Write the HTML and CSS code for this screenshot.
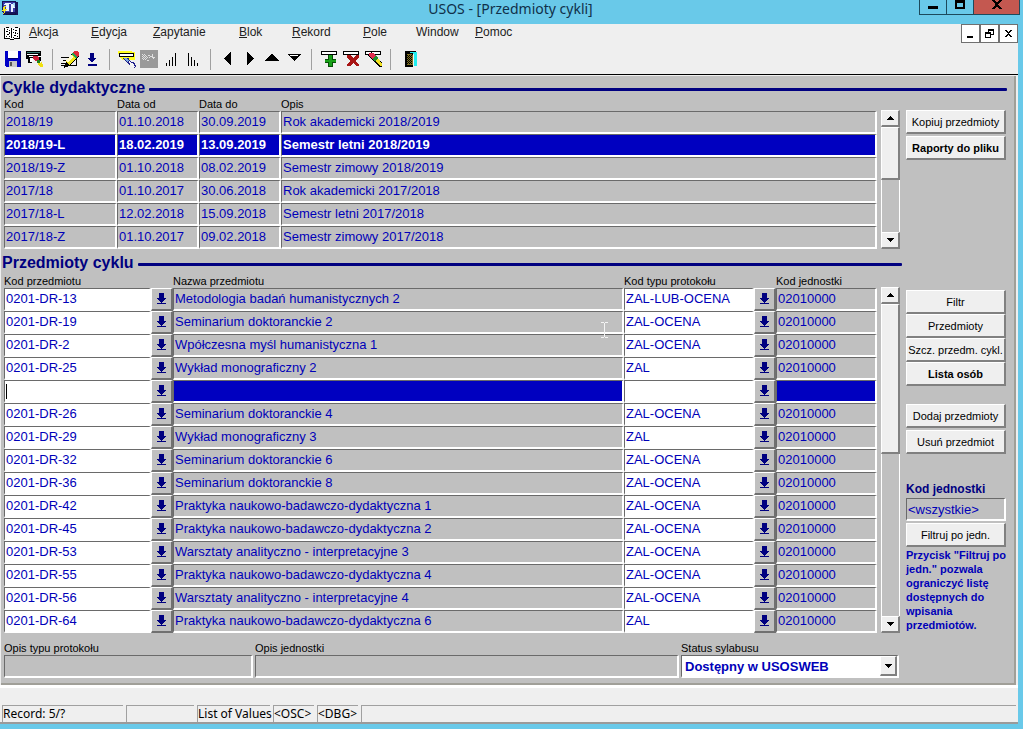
FILE: index.html
```html
<!DOCTYPE html>
<html lang="pl">
<head>
<meta charset="utf-8">
<title>USOS - [Przedmioty cykli]</title>
<link rel="stylesheet" href="styles.css">
</head>
<body>
<svg class="defs" aria-hidden="true">
  <symbol id="lov" viewBox="0 0 9 12"><path d="M2 0h5v5h2v1H8v1H7v1H6v1H5v1H4V9H3V8H2V7H1V6H0V5h2zM0 10h9v1H0z"/></symbol>
  <symbol id="tri-up" viewBox="0 0 7 4"><path d="M3 0h1v1h1v1h1v1h1v1H0V3h1V2h1V1h1z"/></symbol>
  <symbol id="tri-down" viewBox="0 0 7 4"><path d="M0 0h7v1H6v1H5v1H4v1H3V3H2V2H1V1H0z"/></symbol>
</svg>

<header class="titlebar">
  <svg class="app-icon" viewBox="0 0 17 17" width="17" height="17" shape-rendering="crispEdges">
    <path fill="#14145a" d="M1 1h14v1h2v13H2v-3H1z"/><path fill="#3c3ca8" d="M2 2h12v10H2z"/>
    <path fill="#e8f4ff" d="M4 3h6v1H8v7H5V5H3V4zM10 4h2l2 4h-2v4h-2z"/><path fill="#9bd6f4" d="M12 3h2v4h-1z"/>
    <path fill="#f4e51c" d="M3 6h2L4 9h2l-4 6 1-4H1z"/><path fill="#101040" d="M14 13h1v2H5v-1h9z"/>
  </svg>
  <h1 class="title">USOS - [Przedmioty cykli]</h1>
  <div class="win-buttons">
    <button class="win-btn" aria-label="Minimalizuj"><svg viewBox="0 0 10 10" width="10" height="10"><path d="M0 6h10v3H0z"/></svg></button>
    <button class="win-btn" aria-label="Maksymalizuj"><svg viewBox="0 0 10 10" width="10" height="10"><path fill-rule="evenodd" d="M0 0h10v9H0zM2 3v4h6V3z"/></svg></button>
    <button class="win-btn close" aria-label="Zamknij"><svg viewBox="0 0 10 10" width="10" height="10"><path d="M0 0h3l2 3 2-3h3L6.500 4.500 10 9H7L5 6 3 9H0l3.500-4.500z"/></svg></button>
  </div>
</header>

<div class="window">
  <nav class="menubar">
    <svg viewBox="0 0 16 13" width="16" height="13" shape-rendering="crispEdges"><path fill="#fff" d="M1 1h14v11H1z"/><path d="M0 1h1v11H0zM15 1h1v11h-1zM1 11h5v1H1zM10 11h5v1h-5zM6 12h4v1H6zM2 0h3v1H2zM11 0h3v1h-3zM7 1h1v10H7zM3 2h1v1H3zM5 3h1v1H5zM2 4h2v1H2zM5 5h1v2H5zM3 7h2v1H3zM2 9h1v1H2zM5 9h1v1H5zM9 2h1v1H9zM11 3h2v1h-2zM9 5h1v1H9zM11 5h1v2h-1zM13 6h1v1h-1zM10 8h2v1h-2zM13 9h1v1h-1zM9 10h1v1H9z"/></svg>
    <div class="menus">
      <button><u>A</u>kcja</button><button><u>E</u>dycja</button><button><u>Z</u>apytanie</button><button><u>B</u>lok</button><button><u>R</u>ekord</button><button><u>P</u>ole</button><button>Window</button><button><u>P</u>omoc</button>
    </div>
    <div class="mdi">
      <button aria-label="Minimalizuj okno"><svg viewBox="0 0 9 9" width="9" height="9"><path d="M1 7h6v2H1z"/></svg></button>
      <button aria-label="Przywróć okno"><svg viewBox="0 0 9 9" width="9" height="9"><path fill-rule="evenodd" d="M3 0h6v6H6V9H0V3h3zM4 2v1h2v2h2V2zM1 5v3h4V5z"/></svg></button>
      <button aria-label="Zamknij okno"><svg viewBox="0 0 9 9" width="9" height="9"><path d="M1 1h2v1h1v1h1V2h1V1h2v1H7v1H6v1H5v1h1v1h1v1h1v1H6V7H5V6H4v1H3v1H1V7h1V6h1V5h1V4H3V3H2V2H1z"/></svg></button>
    </div>
  </nav>

  <div class="toolbar" role="toolbar" aria-label="Narzędzia">
    <button aria-label="Zapisz"><svg viewBox="0 0 16 16" width="16" height="16"><path fill="#0000c8" d="M0 0h16v16H1v-1H0z"/><path fill="#fff" d="M3 0h10v7H3z"/><path fill="#c6c6c6" d="M4 10h8v6H4z"/><path fill="#555" d="M5 11h2v4H5z"/><path fill="#000070" d="M3 7h10v1H3zM15 1h1v14h-1z"/></svg></button>
    <button aria-label="Drukuj"><svg viewBox="0 0 18 16" width="18" height="16"><path d="M0 0h15v10h-2V7H6v5H2V8H0z"/><path fill="#fff" d="M1 3h11v1H1zM3 5h12v1H3zM4 7h3v4H4z"/><path fill="#397a73" d="M1 1h13v1H1z"/><path fill="#d02038" d="M7 5h4l2 2v3h-3L7 8z"/><path fill="#208020" d="M11 9h3v3h-3z"/><path fill="#f0e010" d="M12 12h3v-1h1v2h1v3h-3l-2-2z"/></svg></button>
    <span class="sep"></span>
    <button aria-label="Edytuj"><svg viewBox="0 0 18 17" width="18" height="17"><path d="M0 6h9v1H0zM2 9h6v1H2zM0 12h5v1H0zM0 14h15v1H0zM15 8h1v7h-1z"/><path d="M13 0h3l2 2v3L8 15l-5 2 2-6z"/><path fill="#f2e818" d="M11 3l4 4-7 7-3-3z"/><path fill="#fffbd0" d="M10 4l2 2-5 5-2-1z"/><path fill="#28a050" d="M12 2l4 4-1 2-5-5z"/><path fill="#e02838" d="M13 0h3l2 2v3l-2 1-4-4z"/></svg></button>
    <button aria-label="Lista wartości"><svg viewBox="0 0 10 13" width="10" height="13"><path fill="#000080" d="M3 0h4v5h2v1H8v1H7v1H6v1H4V8H3V7H2V6H1V5h2zM1 11h9v2H1z"/></svg></button>
    <span class="sep"></span>
    <button aria-label="Zapytanie"><svg viewBox="0 0 19 17" width="19" height="17"><path fill="#ffff20" d="M0 0h10l7 1v8H4L1 6z"/><path d="M1 2h15v4H1z"/><path fill="#fff" d="M2 3h13v2H2z"/><path fill="#20208c" d="M5 7h6l1 3 5 2 1 4-3 1-3-3-3-2z"/><path fill="#79a9dc" d="M6 7h3l2 3-2 1z"/><path fill="#f4f4f4" d="M11 10l5 3 1 3-2 1-3-4z"/></svg></button>
    <button disabled aria-label="Wykonaj"><svg viewBox="0 0 18 18" width="18" height="18"><path fill="#999" d="M0 0h18v18H0z"/><path fill="#e0e0e0" d="M2 4h1v1H2zM4 4h1v1H4zM3 5h1v1H3zM5 5h1v1H5zM2 6h1v1H2zM4 6h1v1H4zM6 6h1v1H6zM3 7h1v1H3zM5 7h1v1H5zM7 7h1v1H7zM2 8h1v1H2zM4 8h1v1H4zM6 8h1v1H6zM3 9h1v1H3zM5 9h1v1H5zM8 5h2v1H8zM9 7h1v1H9zM10 6h1v1h-1zM12 4h1v3h2v1h-1v1h-1V8h-1V7h-1V6h1zM7 10h2v1H7z"/></svg></button>
    <button aria-label="Sortuj rosnąco"><svg viewBox="0 0 11 15" width="11" height="15"><path d="M0 11h1v3H0zM3 8h1v6H3zM6 5h1v9H6zM9 1h1v13H9z"/></svg></button>
    <button aria-label="Sortuj malejąco"><svg viewBox="0 0 11 15" width="11" height="15"><path d="M0 1h1v13H0zM3 5h1v9H3zM6 8h1v6H6zM9 11h1v3H9z"/></svg></button>
    <span class="sep"></span>
    <button aria-label="Poprzedni blok"><svg viewBox="0 0 8 15" width="8" height="15"><path d="M7 0v13L0 7V6z"/></svg></button>
    <button aria-label="Następny blok"><svg viewBox="0 0 8 15" width="8" height="15"><path d="M1 0l7 6v1l-7 6z"/></svg></button>
    <button aria-label="Poprzedni rekord"><svg viewBox="0 0 14 10" width="14" height="10"><path d="M6 0h1l7 7H0z"/></svg></button>
    <button aria-label="Następny rekord"><svg viewBox="0 0 14 10" width="14" height="10"><path d="M0 0h14L7 7z"/><path fill="#fff" d="M3 1h8v1H3z"/></svg></button>
    <span class="sep"></span>
    <button aria-label="Dodaj rekord"><svg viewBox="0 0 17 16" width="17" height="16"><path d="M0 0h16v4H0z"/><path fill="#fff" d="M1 1h14v2H1z"/><path fill="#064f06" d="M7 4h5v4h3v4h-3v4H7v-4H4V8h3z"/><path fill="#18a018" d="M8 4h3v5h4v2h-4v4H8v-4H4V9h4z"/></svg></button>
    <button aria-label="Usuń rekord"><svg viewBox="0 0 17 16" width="17" height="16"><path d="M0 0h16v4H0z"/><path fill="#fff" d="M1 1h14v2H1z"/><path fill="#a81414" d="M4 4h4l2 3 3-3h3v2l-3 4 3 4v1h-3l-3-3-3 3H4v-2l3-3-3-4z"/></svg></button>
    <button aria-label="Wyczyść rekord"><svg viewBox="0 0 17 16" width="17" height="16"><path d="M0 0h16v4H0z"/><path fill="#fff" d="M1 1h14v2H1z"/><path d="M3 4l3-3 11 11v4h-3z"/><path fill="#e03050" d="M4 2h4l3 3-3 3-4-3z"/><path fill="#209030" d="M7 8l4-4 2 3-3 3z"/><path fill="#f0e020" d="M10 10l3-3 4 6v2h-2z"/></svg></button>
    <span class="sep"></span>
    <button class="exit" aria-label="Wyjście"><svg viewBox="0 0 12 16" width="12" height="16"><path d="M0 0h11v1h-3v15H0z"/><path fill="#20eeee" d="M5 1h7v14H9V4L7 2H5z"/><path fill="#806f20" d="M2 3h5l1 2v9H2z"/><path d="M2 4h1v1H2zM4 4h1v1H4zM6 4h1v1H6zM3 5h1v1H3zM5 5h1v1H5zM2 6h1v1H2zM4 6h1v1H4zM6 6h1v1H6zM3 7h1v1H3zM5 7h1v1H5zM2 8h1v1H2zM4 8h1v1H4zM6 8h1v1H6zM3 9h1v1H3zM5 9h1v1H5zM2 10h1v1H2zM4 10h1v1H4zM6 10h1v1H6zM3 11h1v1H3zM5 11h1v1H5zM2 12h1v1H2zM4 12h1v1H4zM6 12h1v1H6z"/></svg></button>
  </div>

  <main class="form">
    <section class="cycles">
      <h2 class="section-head"><span>Cykle dydaktyczne</span></h2>
      <div class="block">
        <table class="grid">
          <colgroup><col class="c-cycle"><col class="c-date"><col class="c-date"><col></colgroup>
          <thead><tr><th>Kod</th><th>Data od</th><th>Data do</th><th>Opis</th></tr></thead>
          <tbody>
            <tr><td>2018/19</td><td>01.10.2018</td><td>30.09.2019</td><td>Rok akademicki 2018/2019</td></tr>
            <tr class="selected"><td>2018/19-L</td><td>18.02.2019</td><td>13.09.2019</td><td>Semestr letni 2018/2019</td></tr>
            <tr><td>2018/19-Z</td><td>01.10.2018</td><td>08.02.2019</td><td>Semestr zimowy 2018/2019</td></tr>
            <tr><td>2017/18</td><td>01.10.2017</td><td>30.06.2018</td><td>Rok akademicki 2017/2018</td></tr>
            <tr><td>2017/18-L</td><td>12.02.2018</td><td>15.09.2018</td><td>Semestr letni 2017/2018</td></tr>
            <tr><td>2017/18-Z</td><td>01.10.2017</td><td>09.02.2018</td><td>Semestr zimowy 2017/2018</td></tr>
          </tbody>
        </table>
        <div class="scroll">
          <button aria-label="W górę"><svg width="7" height="4"><use href="#tri-up"/></svg></button>
          <div class="track"><div class="thumb thumb-half"></div></div>
          <button aria-label="W dół"><svg width="7" height="4"><use href="#tri-down"/></svg></button>
        </div>
        <div class="side side-top">
          <button class="btn">Kopiuj przedmioty</button>
          <button class="btn strong">Raporty do pliku</button>
        </div>
      </div>
    </section>

    <section class="subjects">
      <div class="subjects-main">
        <h2 class="section-head"><span>Przedmioty cyklu</span></h2>
        <div class="block">
          <table class="grid">
            <colgroup><col class="c-code"><col class="c-lov"><col><col class="c-type"><col class="c-lov"><col class="c-unit"></colgroup>
            <thead><tr><th colspan="2">Kod przedmiotu</th><th>Nazwa przedmiotu</th><th colspan="2">Kod typu protokołu</th><th>Kod jednostki</th></tr></thead>
            <tbody>
              <tr><td class="edit"><input aria-label="Kod przedmiotu" value="0201-DR-13"></td><td class="pick"><button aria-label="Lista"><svg><use href="#lov"/></svg></button></td><td>Metodologia badań humanistycznych 2</td><td class="edit"><input aria-label="Typ protokołu" value="ZAL-LUB-OCENA"></td><td class="pick"><button aria-label="Lista"><svg><use href="#lov"/></svg></button></td><td>02010000</td></tr>
              <tr><td class="edit"><input aria-label="Kod przedmiotu" value="0201-DR-19"></td><td class="pick"><button aria-label="Lista"><svg><use href="#lov"/></svg></button></td><td>Seminarium doktoranckie 2</td><td class="edit"><input aria-label="Typ protokołu" value="ZAL-OCENA"></td><td class="pick"><button aria-label="Lista"><svg><use href="#lov"/></svg></button></td><td>02010000</td></tr>
              <tr><td class="edit"><input aria-label="Kod przedmiotu" value="0201-DR-2"></td><td class="pick"><button aria-label="Lista"><svg><use href="#lov"/></svg></button></td><td>Wpółczesna myśl humanistyczna 1</td><td class="edit"><input aria-label="Typ protokołu" value="ZAL-OCENA"></td><td class="pick"><button aria-label="Lista"><svg><use href="#lov"/></svg></button></td><td>02010000</td></tr>
              <tr><td class="edit"><input aria-label="Kod przedmiotu" value="0201-DR-25"></td><td class="pick"><button aria-label="Lista"><svg><use href="#lov"/></svg></button></td><td>Wykład monograficzny 2</td><td class="edit"><input aria-label="Typ protokołu" value="ZAL"></td><td class="pick"><button aria-label="Lista"><svg><use href="#lov"/></svg></button></td><td>02010000</td></tr>
              <tr class="selected"><td class="edit"><input class="caret" aria-label="Kod przedmiotu" value=""></td><td class="pick"><button aria-label="Lista"><svg><use href="#lov"/></svg></button></td><td></td><td class="edit"><input aria-label="Typ protokołu" value=""></td><td class="pick"><button aria-label="Lista"><svg><use href="#lov"/></svg></button></td><td></td></tr>
              <tr><td class="edit"><input aria-label="Kod przedmiotu" value="0201-DR-26"></td><td class="pick"><button aria-label="Lista"><svg><use href="#lov"/></svg></button></td><td>Seminarium doktoranckie 4</td><td class="edit"><input aria-label="Typ protokołu" value="ZAL-OCENA"></td><td class="pick"><button aria-label="Lista"><svg><use href="#lov"/></svg></button></td><td>02010000</td></tr>
              <tr><td class="edit"><input aria-label="Kod przedmiotu" value="0201-DR-29"></td><td class="pick"><button aria-label="Lista"><svg><use href="#lov"/></svg></button></td><td>Wykład monograficzny 3</td><td class="edit"><input aria-label="Typ protokołu" value="ZAL"></td><td class="pick"><button aria-label="Lista"><svg><use href="#lov"/></svg></button></td><td>02010000</td></tr>
              <tr><td class="edit"><input aria-label="Kod przedmiotu" value="0201-DR-32"></td><td class="pick"><button aria-label="Lista"><svg><use href="#lov"/></svg></button></td><td>Seminarium doktoranckie 6</td><td class="edit"><input aria-label="Typ protokołu" value="ZAL-OCENA"></td><td class="pick"><button aria-label="Lista"><svg><use href="#lov"/></svg></button></td><td>02010000</td></tr>
              <tr><td class="edit"><input aria-label="Kod przedmiotu" value="0201-DR-36"></td><td class="pick"><button aria-label="Lista"><svg><use href="#lov"/></svg></button></td><td>Seminarium doktoranckie 8</td><td class="edit"><input aria-label="Typ protokołu" value="ZAL-OCENA"></td><td class="pick"><button aria-label="Lista"><svg><use href="#lov"/></svg></button></td><td>02010000</td></tr>
              <tr><td class="edit"><input aria-label="Kod przedmiotu" value="0201-DR-42"></td><td class="pick"><button aria-label="Lista"><svg><use href="#lov"/></svg></button></td><td>Praktyka naukowo-badawczo-dydaktyczna 1</td><td class="edit"><input aria-label="Typ protokołu" value="ZAL-OCENA"></td><td class="pick"><button aria-label="Lista"><svg><use href="#lov"/></svg></button></td><td>02010000</td></tr>
              <tr><td class="edit"><input aria-label="Kod przedmiotu" value="0201-DR-45"></td><td class="pick"><button aria-label="Lista"><svg><use href="#lov"/></svg></button></td><td>Praktyka naukowo-badawczo-dydaktyczna 2</td><td class="edit"><input aria-label="Typ protokołu" value="ZAL-OCENA"></td><td class="pick"><button aria-label="Lista"><svg><use href="#lov"/></svg></button></td><td>02010000</td></tr>
              <tr><td class="edit"><input aria-label="Kod przedmiotu" value="0201-DR-53"></td><td class="pick"><button aria-label="Lista"><svg><use href="#lov"/></svg></button></td><td>Warsztaty analityczno - interpretacyjne 3</td><td class="edit"><input aria-label="Typ protokołu" value="ZAL-OCENA"></td><td class="pick"><button aria-label="Lista"><svg><use href="#lov"/></svg></button></td><td>02010000</td></tr>
              <tr><td class="edit"><input aria-label="Kod przedmiotu" value="0201-DR-55"></td><td class="pick"><button aria-label="Lista"><svg><use href="#lov"/></svg></button></td><td>Praktyka naukowo-badawczo-dydaktyczna 4</td><td class="edit"><input aria-label="Typ protokołu" value="ZAL-OCENA"></td><td class="pick"><button aria-label="Lista"><svg><use href="#lov"/></svg></button></td><td>02010000</td></tr>
              <tr><td class="edit"><input aria-label="Kod przedmiotu" value="0201-DR-56"></td><td class="pick"><button aria-label="Lista"><svg><use href="#lov"/></svg></button></td><td>Warsztaty analityczno - interpretacyjne 4</td><td class="edit"><input aria-label="Typ protokołu" value="ZAL-OCENA"></td><td class="pick"><button aria-label="Lista"><svg><use href="#lov"/></svg></button></td><td>02010000</td></tr>
              <tr><td class="edit"><input aria-label="Kod przedmiotu" value="0201-DR-64"></td><td class="pick"><button aria-label="Lista"><svg><use href="#lov"/></svg></button></td><td>Praktyka naukowo-badawczo-dydaktyczna 6</td><td class="edit"><input aria-label="Typ protokołu" value="ZAL"></td><td class="pick"><button aria-label="Lista"><svg><use href="#lov"/></svg></button></td><td>02010000</td></tr>
            </tbody>
          </table>
          <div class="scroll">
            <button aria-label="W górę"><svg width="7" height="4"><use href="#tri-up"/></svg></button>
            <div class="track"><div class="thumb thumb-list"></div></div>
            <button aria-label="W dół"><svg width="7" height="4"><use href="#tri-down"/></svg></button>
          </div>
        </div>
        <div class="details">
          <div class="field"><label for="d-type">Opis typu protokołu</label><input id="d-type" readonly></div>
          <div class="field"><label for="d-unit">Opis jednostki</label><input id="d-unit" readonly></div>
          <div class="field"><label for="d-status">Status sylabusu</label>
            <div class="combo"><select id="d-status"><option>Dostępny w USOSWEB</option></select><span class="combo-arrow"><svg width="7" height="4"><use href="#tri-down"/></svg></span></div>
          </div>
        </div>
        <svg class="pointer" viewBox="0 0 7 17" width="7" height="17" aria-hidden="true"><path d="M0 0h3v1h1V0h3v1H4v14h3v1H4v-1H3v1H0v-1h3V1H0z"/></svg>
      </div>
      <aside class="side side-main">
        <button class="btn">Filtr</button>
        <button class="btn">Przedmioty</button>
        <button class="btn">Szcz. przedm. cykl.</button>
        <button class="btn strong">Lista osób</button>
        <div class="side-group">
          <button class="btn">Dodaj przedmioty</button>
          <button class="btn">Usuń przedmiot</button>
        </div>
        <div class="unit-filter">
          <label for="unit">Kod jednostki</label>
          <input id="unit" value="&lt;wszystkie&gt;" readonly>
          <button class="btn">Filtruj po jedn.</button>
          <p>Przycisk "Filtruj po jedn." pozwala ograniczyć listę dostępnych do wpisania przedmiotów.</p>
        </div>
      </aside>
    </section>
  </main>

  <footer class="status">
    <div class="message"></div>
    <div class="cells"><span>Record: 5/?</span><span></span><span>List of Values</span><span>&lt;OSC&gt;</span><span>&lt;DBG&gt;</span><span></span></div>
  </footer>
</div>
</body>
</html>
```

FILE: styles.css
```css
* { box-sizing: border-box; }

body {
  margin: 0;
  min-height: 100vh;
  background: #69c9e9;
  font-family: "Liberation Sans", Arial, sans-serif;
  font-size: 11px;
  color: #000;
}

button, input, select { font: inherit; color: inherit; margin: 0; border-radius: 0; }
button { padding: 0; border: 0; background: none; display: flex; align-items: center; justify-content: center; }
svg { display: block; flex: none; shape-rendering: crispEdges; }
.defs { position: absolute; width: 0; height: 0; }

/* Title bar */
.titlebar { display: grid; grid-template-columns: 1fr auto 1fr; height: 24px; padding: 0 3px 0 1px; }
.title { margin: 0; font: 14px/18px "Noto Sans", "Open Sans", sans-serif; color: #10304a; }
.win-buttons { display: flex; justify-self: end; height: 15px; }
.win-btn { width: 27px; border: 1px solid #1d4a5c; border-top: 0; border-right: 0; align-items: flex-start; }
.win-btn.close { width: 47px; background: #c45850; border-right: 1px solid #1d4a5c; }

.window { margin-right: 5px; background: #efefef; border-bottom: 2px solid #9a9a9a; }

/* Menu */
.menubar { display: flex; align-items: flex-start; height: 18px; padding: 0 0 0 4px; }
.menubar > svg { margin-top: 3px; }
.menus {
  flex: 1;
  display: grid;
  grid-template-columns: 62px 62px 86px 53px 71px 53px 59px 1fr;
  margin-left: 9px;
  font-size: 12px;
  line-height: 16px;
}
.menus button { justify-self: start; color: #222; }
.mdi { display: flex; height: 19px; }
.mdi button { width: 19px; background: #fff; border: 1px solid #707070; }

.toolbar { display: flex; align-items: center; height: 33px; padding: 2px 2px 0; border-bottom: 1px solid #000; }
.toolbar button { width: 22px; height: 22px; }
.toolbar .exit { margin-left: 3px; }
.sep { width: 1px; height: 21px; margin: 0 6px; background: #a0a0a0; }

/* Form */
.form {
  margin: 1px 2px 0 1px;
  padding: 2px 7px 5px 1px;
  background: #c0c0c0;
  border-right: 2px solid #a09f98;
  border-bottom: 2px solid #a09f98;
}
.section-head {
  display: flex;
  align-items: center;
  gap: 4px;
  margin: 0;
  height: 20px;
  font-size: 16px;
  line-height: 20px;
  color: #000080;
}
.section-head::after { content: ""; flex: 1; height: 3px; margin-top: 2px; background: #000080; border-radius: 1px; }
.block { display: flex; align-items: stretch; padding-left: 2px; }

.grid { flex: 1; min-width: 0; table-layout: fixed; border-collapse: separate; border-spacing: 0; }
.c-cycle { width: 113px; }
.c-date { width: 82px; }
.c-code { width: 147px; }
.c-lov { width: 22px; }
.c-type { width: 130px; }
.c-unit { width: 101px; }
.grid th { height: 13px; padding: 0; font-weight: normal; text-align: left; line-height: 13px; white-space: nowrap; }
.grid td {
  height: 23px;
  padding: 0 0 0 1px;
  border: solid #6a6a6a;
  border-width: 1px 0 0 1px;
  border-right: 2px solid #fff;
  border-bottom: 2px solid #fff;
  font-size: 13px;
  line-height: 20px;
  color: #0000b8;
  white-space: nowrap;
  overflow: hidden;
}
.grid .selected td { background: #0000c0; color: #fff; font-weight: bold; }
.grid td.edit, .grid .selected td.edit { padding: 0; background: #fff; }
.grid td.edit input { display: block; width: 100%; height: 20px; padding: 0 0 0 1px; border: 0; outline: 0; background: transparent; }
.grid td.edit .caret { background: linear-gradient(#000, #000) 1px 3px / 1px 15px no-repeat; }
.grid td.pick, .grid .selected td.pick { padding: 0; border: 0; background: none; }
.pick button { width: 22px; height: 23px; background: #c0c0c0; border: 1px solid #fff; border-right: 2px solid #707070; border-bottom: 2px solid #707070; }
.pick svg { width: 9px; height: 12px; fill: #000080; }

/* Scroll bars */
.scroll { width: 19px; margin: 12px 0 0 4px; display: flex; flex-direction: column; }
.scroll button, .thumb, .combo-arrow { background: #efefef; border: 1px solid #fff; border-right: 2px solid #808080; border-bottom: 2px solid #808080; }
.scroll button { height: 17px; flex: none; }
.track { flex: 1; border: solid #fff; border-width: 0 1px; }
.thumb { margin: 0 -1px; }
.thumb-half { height: 50%; }
.thumb-list { height: 48%; }

/* Side buttons */
.side { display: flex; flex-direction: column; align-items: flex-start; }
.btn { width: 100px; height: 24px; background: #efefef; border: 1px solid #fff; border-right: 2px solid #808080; border-bottom: 2px solid #808080; white-space: nowrap; }
.btn.strong { font-weight: bold; }
.side-top { gap: 2px; margin: 12px 1px 0 6px; }

.subjects { display: flex; gap: 4px; margin-top: 4px; }
.subjects-main { flex: 1; min-width: 0; position: relative; }
.subjects-main .block { margin-top: 2px; padding-right: 2px; }
.side-main { width: 101px; padding-top: 37px; }
.side-group { display: grid; gap: 2px; margin-top: 18px; }
.unit-filter { margin-top: 27px; color: #0000b8; }
.unit-filter label { display: block; font-size: 12px; line-height: 16px; font-weight: bold; color: #000080; }
.unit-filter .btn { color: #000; }
.unit-filter p { width: 106px; margin: 1px 0 0; font-weight: bold; line-height: 14px; }
.unit-filter input, .field input {
  display: block;
  width: 100%;
  height: 23px;
  padding: 0 0 0 1px;
  border: 1px solid #6a6a6a;
  border-right: 2px solid #fff;
  border-bottom: 2px solid #fff;
  background: #c0c0c0;
  font-size: 13px;
}
.unit-filter input { width: 100px; margin: 1px 0 2px; }

/* Record details */
.details { display: grid; grid-template-columns: 249px 1fr 218px; gap: 2px; margin-top: 9px; padding: 0 3px 0 2px; }
.field label { display: block; line-height: 13px; }
.combo { position: relative; height: 23px; border: 1px solid #6a6a6a; border-right: 2px solid #fff; border-bottom: 2px solid #fff; background: #fff; }
.combo select { width: 100%; height: 20px; padding: 0 18px 0 3px; border: 0; outline: 0; appearance: none; background: #fff; font-size: 13px; font-weight: bold; color: #0000b8; }
.combo-arrow { position: absolute; top: 0; right: 0; bottom: 0; width: 17px; display: grid; place-items: center; pointer-events: none; }
.pointer { position: absolute; left: 599px; top: 69px; fill: #f4f4f4; }

/* Status bar */
.status { padding: 2px 2px 0 1px; font-family: "Noto Sans", sans-serif; font-size: 12px; border-top: 3px solid #fff; }
.message { height: 15px; }
.cells { display: grid; grid-template-columns: 121px 68px 73px 41px 41px 1fr; gap: 3px; margin-left: 1px; }
.cells span { height: 17px; border-top: 1px solid #a0a0a0; border-left: 1px solid #a0a0a0; line-height: 16px; white-space: nowrap; }
```
